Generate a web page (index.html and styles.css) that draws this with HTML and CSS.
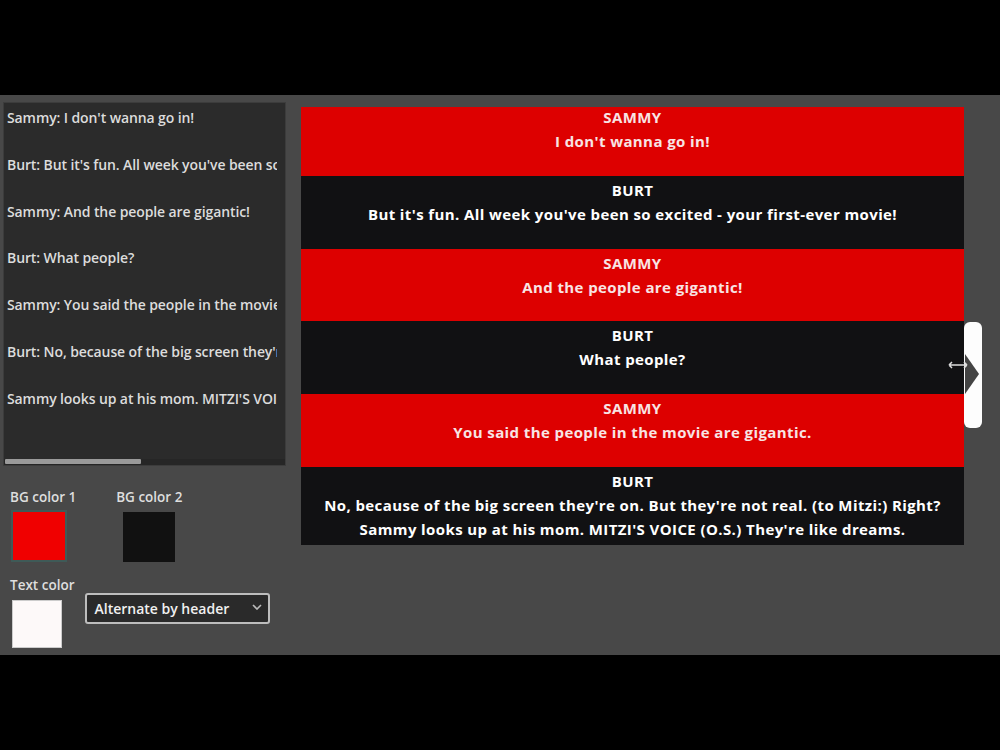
FILE: index.html
```html
<!DOCTYPE html>
<html>
<head>
<meta charset="utf-8">
<link rel="stylesheet" href="styles.css">
</head>
<body>
<div class="bar"></div>
<div class="app">
  <div class="left">
    <div class="editor">
      <div class="editor-inner">
        <div class="line">Sammy: I don't wanna go in!</div>
        <div class="line">Burt: But it's fun. All week you've been so excited - your first-ever movie!</div>
        <div class="line">Sammy: And the people are gigantic!</div>
        <div class="line">Burt: What people?</div>
        <div class="line">Sammy: You said the people in the movie are gigantic.</div>
        <div class="line">Burt: No, because of the big screen they're on. But they're not real. (to Mitzi:) Right?</div>
        <div class="line">Sammy looks up at his mom. MITZI'S VOICE (O.S.) They're like dreams.</div>
      </div>
      <div class="hscroll"><div class="hthumb"></div></div>
    </div>
    <div class="controls">
      <div class="ctrl ctrl-1">
        <div class="label">BG color 1</div>
        <div class="swatch swatch-red"></div>
      </div>
      <div class="ctrl ctrl-2">
        <div class="label">BG color 2</div>
        <div class="swatch swatch-black"></div>
      </div>
    </div>
    <div class="controls controls-2">
      <div class="ctrl ctrl-3">
        <div class="label">Text color</div>
        <div class="swatch swatch-white"></div>
      </div>
      <div class="select">
        <span>Alternate by header</span>
        <svg class="chev" width="10" height="6" viewBox="0 0 10 6"><path d="M1 1 L5 5 L9 1" fill="none" stroke="#bbb" stroke-width="1.6"/></svg>
      </div>
    </div>
  </div>
  <div class="right">
    <div class="preview">
      <div class="rows">
        <div class="row red"><div class="name">SAMMY</div><div class="text">I don't wanna go in!</div></div>
        <div class="row dark"><div class="name">BURT</div><div class="text">But it's fun. All week you've been so excited - your first-ever movie!</div></div>
        <div class="row red"><div class="name">SAMMY</div><div class="text">And the people are gigantic!</div></div>
        <div class="row dark"><div class="name">BURT</div><div class="text">What people?</div></div>
        <div class="row red"><div class="name">SAMMY</div><div class="text">You said the people in the movie are gigantic.</div></div>
        <div class="row dark last"><div class="name">BURT</div><div class="text">No, because of the big screen they're on. But they're not real. (to Mitzi:) Right?<br>Sammy looks up at his mom. MITZI'S VOICE (O.S.) They're like dreams.</div></div>
      </div>
    </div>
    <div class="handle">
      <svg width="18" height="106" viewBox="0 0 18 106"><path d="M1 32 L15 52 L1 72 Z" fill="#444"/></svg>
    </div>
    <div class="cursor">
      <svg width="22" height="10" viewBox="0 0 22 10"><path d="M2 5 H20 M2 5 L5 2 M2 5 L5 8 M20 5 L17 2 M20 5 L17 8" fill="none" stroke="#ddd" stroke-width="1.5"/></svg>
    </div>
  </div>
</div>
<div class="bar bar-bottom"></div>
</body>
</html>
```

FILE: styles.css
```css
html, body {
  margin: 0;
  padding: 0;
  background: #000;
}
body {
  width: 1000px;
  height: 750px;
  overflow: hidden;
  font-family: "Open Sans", "Noto Sans", sans-serif;
}
.bar {
  height: 95px;
  background: #000;
}
.app {
  height: 560px;
  background: #484848;
  display: flex;
  gap: 15px;
}
.left {
  width: 283px;
  padding: 7px 0 0 3px;
  flex: none;
}
.editor {
  height: 364px;
  background: #2b2b2b;
  box-sizing: border-box;
  border: 1px solid #3c3c3c;
  position: relative;
  overflow: hidden;
  display: flex;
  flex-direction: column;
}
.editor-inner {
  flex: 1;
  padding: 3px 0 0 3px;
  overflow: hidden;
}
.line {
  color: #dcdcdc;
  font-size: 14px;
  font-weight: 600;
  line-height: 23.4px;
  white-space: nowrap;
  margin-bottom: 23.4px;
  letter-spacing: -0.1px;
  width: 270px;
  overflow: hidden;
}
.hscroll {
  height: 6px;
  background: #262626;
  padding-left: 1px;
}
.hthumb {
  width: 136px;
  height: 5px;
  background: #9a9a9a;
  border-radius: 1px;
}
.controls {
  display: flex;
  gap: 40px;
  margin-top: 23px;
  padding-left: 7px;
}
.controls-2 {
  margin-top: 15px;
  gap: 11px;
}
.ctrl {
  display: flex;
  flex-direction: column;
}
.label {
  color: #dedede;
  font-size: 13.5px;
  line-height: 16px;
  font-weight: 600;
}
.swatch {
  width: 50px;
  height: 48px;
  margin-top: 7px;
  margin-left: 4px;
  box-sizing: border-box;
}
.swatch-red {
  background: #f00000;
  border: 2px solid #3f5a57;
  width: 56px;
  height: 52px;
  margin-left: 1px;
  margin-top: 5px;
}
.swatch-black {
  background: #111;
  width: 52px;
  height: 50px;
  margin-left: 7px;
}
.swatch-white {
  background: #fdf9f9;
  border: 1px solid #ccc;
  margin-left: 2px;
  margin-top: 7px;
}
.select {
  margin-top: 16px;
  width: 185px;
  height: 31px;
  box-sizing: border-box;
  border: 2px solid #bdbdbd;
  border-radius: 3px;
  background: #2a2a2a;
  color: #f0f0f0;
  font-size: 14px;
  font-weight: 600;
  display: flex;
  align-items: center;
  justify-content: space-between;
  padding: 0 6px 0 7px;
}
.chev {
  margin-bottom: 4px;
}
.right {
  position: relative;
  padding-top: 12px;
  width: 681px;
}
.preview {
  width: 663px;
  height: 438px;
  overflow: hidden;
  font-family: "Open Sans", "Noto Sans", sans-serif;
  font-weight: 700;
  font-size: 15px;
  color: #fff;
  text-align: center;
}
.rows {
  margin-top: -4px;
}
.row {
  padding: 2px 0 0;
  height: 72.75px;
  box-sizing: border-box;
  line-height: 24px;
  letter-spacing: 0.4px;
}
.row.red {
  background: #dd0000;
  color: #f8e4e4;
}
.row.dark {
  background: #111113;
}
.row.last {
  height: auto;
  padding-bottom: 10px;
}
.handle {
  position: absolute;
  left: 663px;
  top: 227px;
  width: 18px;
  height: 106px;
  background: #fdfdfd;
  border-radius: 6px;
}
.handle svg {
  display: block;
}
.cursor {
  position: absolute;
  left: 646px;
  top: 265px;
}
.cursor svg {
  display: block;
}
.bar-bottom {
  height: 95px;
}
```
